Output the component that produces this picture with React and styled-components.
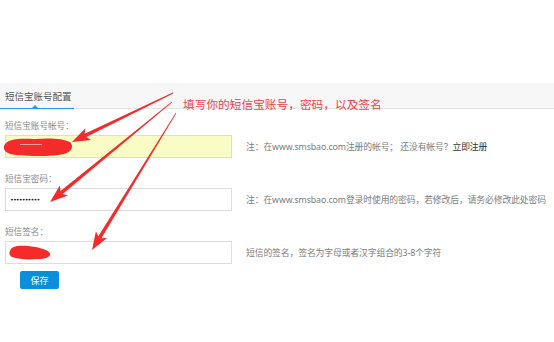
import React from "react";
import styled, { createGlobalStyle } from "styled-components";

const Global = createGlobalStyle`
  html, body { margin: 0; padding: 0; background: #fff; }
  body {
    width: 554px; height: 342px; overflow: hidden;
    font-family: "Noto Sans", "Noto Sans CJK SC", sans-serif;
  }
  #root { position: relative; }
`;

const Page = styled.div`
  position: relative;
  width: 554px;
  height: 342px;
  padding-top: 83px;
  box-sizing: border-box;
  overflow: hidden;
`;

const TabBar = styled.div`
  height: 25px;
  background: #f7f7f7;
  border-bottom: 1px solid #e3e3e3;
  display: flex;
  align-items: stretch;
`;

const Tab = styled.div`
  position: relative;
  width: 74px;
  box-sizing: border-box;
  padding-left: 5px;
  display: flex;
  align-items: center;
  font-size: 9.5px;
  color: #555;
  border-bottom: ${(p) => (p.$active ? "1.5px solid #1e9fe0" : "none")};
  margin-bottom: -1px;
  &::after {
    content: "";
    display: ${(p) => (p.$active ? "block" : "none")};
    position: absolute;
    left: 32px;
    bottom: 0;
    border-left: 3px solid transparent;
    border-right: 3px solid transparent;
    border-bottom: 3px solid #1e9fe0;
  }
`;

const Form = styled.div`
  padding: 0 5px;
  display: flex;
  flex-direction: column;
`;

const Field = styled.div`
  margin-top: ${(p) => (p.$first ? "11px" : "15px")};
  display: flex;
  flex-direction: column;
`;

const Label = styled.div`
  height: 12px;
  line-height: 12px;
  font-size: 8.6px;
  color: #8a8a8a;
  margin-bottom: 3px;
`;

const Row = styled.div`
  display: flex;
  align-items: center;
`;

const Input = styled.div`
  flex: 0 0 227px;
  width: 227px;
  height: 23px;
  box-sizing: border-box;
  border: 1px solid #dcdcdc;
  background: ${(p) => (p.$autofill ? "#fafcc6" : "#fff")};
  display: flex;
  align-items: center;
  padding-left: 4px;
  font-size: 9px;
  color: #111;
`;

const Dots = styled.span`
  font-family: "DejaVu Sans", sans-serif;
  font-size: 6.5px;
  letter-spacing: -0.9px;
  color: #222;
`;

const Note = styled.div`
  margin-left: 14px;
  font-size: 8.8px;
  letter-spacing: -0.1px;
  color: #7d7d7d;
  white-space: nowrap;
`;

const NoteLink = styled.span`
  color: #333;
`;

const SaveButton = styled.button`
  margin: 7px 0 0 15px;
  width: 39px;
  height: 18px;
  padding: 0;
  border: none;
  border-radius: 2px;
  background: #0a8fdc;
  color: #fff;
  font-family: "Noto Sans CJK SC", sans-serif;
  font-size: 9px;
  align-self: flex-start;
`;

const Overlay = styled.svg`
  position: absolute;
  left: 0;
  top: 0;
  pointer-events: none;
`;

const AnnotText = styled.div`
  position: absolute;
  left: 183px;
  top: 96px;
  font-family: "Noto Sans CJK SC", sans-serif;
  font-size: 11.7px;
  line-height: 16px;
  color: #f0424a;
  white-space: nowrap;
`;

function arrowPoints(tx, ty, px, py) {
  const dx = px - tx, dy = py - ty;
  const len = Math.hypot(dx, dy);
  const ux = dx / len, uy = dy / len;
  const nx = -uy, ny = ux;
  const L = 15, W = 6.5;
  const bx = px - ux * L, by = py - uy * L;
  const b2x = px - ux * (L + 3), b2y = py - uy * (L + 3);
  const pts = [
    [tx + nx * 0.4, ty + ny * 0.4],
    [bx + nx * 1.8, by + ny * 1.8],
    [b2x + nx * W, b2y + ny * W],
    [px, py],
    [b2x - nx * W, b2y - ny * W],
    [bx - nx * 1.8, by - ny * 1.8],
    [tx - nx * 0.4, ty - ny * 0.4],
  ];
  return pts.map((p) => p.map((v) => v.toFixed(1)).join(",")).join(" ");
}

export default function App() {
  return (
    <>
      <Global />
      <Page>
        <TabBar>
          <Tab $active>短信宝账号配置</Tab>
        </TabBar>
        <Form>
          <Field $first>
            <Label>短信宝账号帐号：</Label>
            <Row>
              <Input $autofill />
              <Note>
                注：在www.smsbao.com注册的帐号； 还没有帐号？<NoteLink>立即注册</NoteLink>
              </Note>
            </Row>
          </Field>
          <Field>
            <Label>短信宝密码：</Label>
            <Row>
              <Input>
                <Dots>••••••••••</Dots>
              </Input>
              <Note>注：在www.smsbao.com登录时使用的密码，若修改后，请务必修改此处密码</Note>
            </Row>
          </Field>
          <Field>
            <Label>短信签名：</Label>
            <Row>
              <Input />
              <Note>短信的签名，签名为字母或者汉字组合的3-8个字符</Note>
            </Row>
          </Field>
          <SaveButton>保存</SaveButton>
        </Form>

        <AnnotText>填写你的短信宝账号，密码，以及签名</AnnotText>
        <Overlay width="554" height="342" viewBox="0 0 554 342">
          <g fill="#f52a2a">
            <path d="M4 146 C6 139 20 138 34 139 C48 138 62 138 70 142 C74 146 72 152 64 154 C50 157 30 156 16 155 C7 154 3 151 4 146 Z" />
            <path d="M10 251 C11 246 18 245 28 246 C38 247 46 249 50 253 C51 257 46 259 38 259 C28 260 18 259 12 257 C9 255 9 253 10 251 Z" />
            <polygon points={arrowPoints(173, 93, 72, 142)} />
            <polygon points={arrowPoints(172, 102, 50, 202)} />
            <polygon points={arrowPoints(176, 113, 92, 250)} />
          </g>
          <g fill="#f8a0a0">
            <rect x="20" y="144" width="22" height="1" />
          </g>
        </Overlay>
      </Page>
    </>
  );
}
